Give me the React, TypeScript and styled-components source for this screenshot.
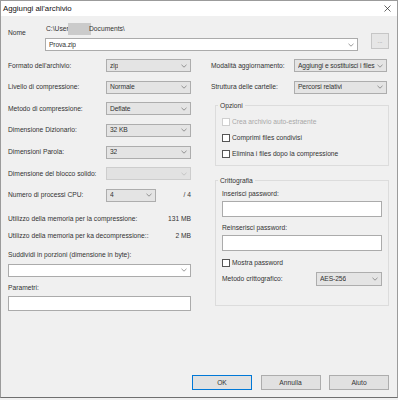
import React from 'react';
import styled, { createGlobalStyle, css } from 'styled-components';

const GlobalStyle = createGlobalStyle`
  html, body {
    margin: 0;
    padding: 0;
    background: #f0f0f0;
  }
  body {
    font-family: 'Liberation Sans', Arial, sans-serif;
  }
`;

const textColor = '#333333';
const fadedText = '#a8a8a8';
const fieldBorder = '#adadad';

const Window = styled.div`
  width: 398px;
  height: 398px;
  box-sizing: border-box;
  border: 1px solid #9b9b9b;
  border-bottom-color: #6f6f6f;
  background: #f0f0f0;
  display: flex;
  flex-direction: column;
  font-family: 'Liberation Sans', Arial, sans-serif;
  font-size: 6.7px;
  line-height: 10px;
  color: ${textColor};
`;

const TitleBar = styled.div`
  height: 15px;
  flex: none;
  background: #ffffff;
  display: flex;
  align-items: center;
  justify-content: space-between;
  padding: 0 6px 0 2px;
`;

const Title = styled.span`
  font-size: 7.8px;
  color: #111;
`;

const Body = styled.div`
  flex: 1;
  display: flex;
  flex-direction: column;
  padding: 7px 8px 7px 7px;
`;

const NameRow = styled.div`
  display: flex;
  align-items: flex-start;
`;

const NameLabel = styled.div`
  width: 37px;
  padding-top: 5px;
`;

const NameField = styled.div`
  width: 313px;
  display: flex;
  flex-direction: column;
  gap: 3px;
`;

const PathText = styled.div`
  display: flex;
  align-items: center;
  white-space: nowrap;
  padding-left: 1px;
`;

const Redacted = styled.span`
  display: inline-block;
  width: 23px;
  height: 12px;
  margin: 0 -2px 0 -4px;
  background: #cbcbcb;
`;

const BrowseButton = styled.div`
  width: 18px;
  height: 16px;
  box-sizing: border-box;
  margin: 10px 0 0 13px;
  border: 1px solid #c6c6c6;
  background: #e6e6e6;
  color: #8a8a8a;
  display: flex;
  align-items: center;
  justify-content: center;
  font-size: 6px;
`;

const Columns = styled.div`
  display: grid;
  grid-template-columns: 183px 1fr;
  column-gap: 20px;
  margin-top: 8px;
`;

const Column = styled.div`
  display: flex;
  flex-direction: column;
`;

const FieldGrid = styled.div<{ $label: number; $field: number }>`
  display: grid;
  grid-template-columns: ${p => p.$label}px ${p => p.$field}px;
  grid-auto-rows: 13px;
  row-gap: 8.67px;
  align-items: center;
`;

const Label = styled.span`
  white-space: nowrap;
`;

type ComboVariant = 'grey' | 'white' | 'disabled';

const ComboBox = styled.div<{ $variant: ComboVariant; $width?: number; $height?: number }>`
  box-sizing: border-box;
  height: ${p => p.$height ?? 13}px;
  width: ${p => (p.$width ? `${p.$width}px` : '100%')};
  display: flex;
  align-items: center;
  justify-content: space-between;
  gap: 2px;
  padding: 0 3px 0 3px;
  white-space: nowrap;
  ${p =>
    p.$variant === 'grey' &&
    css`
      background: #e4e4e4;
      border: 1px solid ${fieldBorder};
    `}
  ${p =>
    p.$variant === 'white' &&
    css`
      background: #ffffff;
      border: 1px solid #ababab;
    `}
  ${p =>
    p.$variant === 'disabled' &&
    css`
      background: #e2e2e2;
      border: 1px solid #cdcdcd;
    `}
`;

const ComboText = styled.span`
  overflow: hidden;
  letter-spacing: -0.1px;
`;

const Chevron = ({ faded }: { faded?: boolean }) => (
  <svg width="6" height="4" viewBox="0 0 6 4" style={{ flex: 'none' }}>
    <polyline
      points="0.5,0.8 3,3.2 5.5,0.8"
      fill="none"
      stroke={faded ? '#b8b8b8' : '#707070'}
      strokeWidth="0.7"
    />
  </svg>
);

const Combo = ({
  value,
  variant = 'grey',
  width,
  height,
}: {
  value?: string;
  variant?: ComboVariant;
  width?: number;
  height?: number;
}) => (
  <ComboBox $variant={variant} $width={width} $height={height}>
    <ComboText>{value}</ComboText>
    <Chevron faded={variant === 'disabled'} />
  </ComboBox>
);

const CpuCell = styled.div`
  display: flex;
  align-items: center;
  justify-content: space-between;
`;

const InfoRow = styled.div<{ $gap: number }>`
  display: flex;
  justify-content: space-between;
  margin-top: ${p => p.$gap}px;
`;

const StackLabel = styled.div<{ $gap: number }>`
  margin-top: ${p => p.$gap}px;
  white-space: nowrap;
`;

const Spaced = styled.div<{ $gap: number }>`
  margin-top: ${p => p.$gap}px;
`;

const TextBox = styled.div<{ $height: number }>`
  box-sizing: border-box;
  height: ${p => p.$height}px;
  background: #ffffff;
  border: 1px solid #ababab;
`;

const Group = styled.fieldset<{ $gap: number; $bottom: number }>`
  margin: ${p => p.$gap}px 0 0 4px;
  padding: 0 6px ${p => p.$bottom}px 6px;
  border: 1px solid #dcdcdc;
  min-width: 0;
`;

const Legend = styled.legend`
  padding: 0 2px;
  margin-left: -4px;
  line-height: 8px;
  font-size: 6.7px;
`;

const CheckRow = styled.label<{ $gap: number; $disabled?: boolean }>`
  display: flex;
  align-items: center;
  gap: 2px;
  margin-top: ${p => p.$gap}px;
  color: ${p => (p.$disabled ? fadedText : textColor)};
`;

const CheckBox = styled.span<{ $disabled?: boolean }>`
  width: 8px;
  height: 8px;
  box-sizing: border-box;
  background: #ffffff;
  border: 1px solid ${p => (p.$disabled ? '#cfcfcf' : '#555555')};
  flex: none;
`;

const MethodRow = styled.div`
  display: flex;
  align-items: center;
  justify-content: space-between;
  margin-top: 4px;
`;

const Footer = styled.div`
  margin-top: auto;
  display: flex;
  justify-content: flex-end;
  gap: 8.5px;
`;

const Button = styled.div<{ $primary?: boolean }>`
  width: 60px;
  height: 15px;
  box-sizing: border-box;
  display: flex;
  align-items: center;
  justify-content: center;
  background: #e1e1e1;
  border: 1px solid ${p => (p.$primary ? '#0078d7' : fieldBorder)};
`;

const CloseIcon = () => (
  <svg width="7" height="7" viewBox="0 0 7 7">
    <path d="M0.5 0.5 L6.5 6.5 M6.5 0.5 L0.5 6.5" stroke="#222" strokeWidth="0.7" />
  </svg>
);

const leftFields: { label: string; value: string; disabled?: boolean }[] = [
  { label: "Formato dell'archivio:", value: 'zip' },
  { label: 'Livello di compressione:', value: 'Normale' },
  { label: 'Metodo di compressione:', value: 'Deflate' },
  { label: 'Dimensione Dizionario:', value: '32 KB' },
  { label: 'Dimensioni Parola:', value: '32' },
  { label: 'Dimensione del blocco solido:', value: '', disabled: true },
];

export default function App() {
  return (
    <>
      <GlobalStyle />
      <Window>
        <TitleBar>
          <Title>Aggiungi all'archivio</Title>
          <CloseIcon />
        </TitleBar>
        <Body>
          <NameRow>
            <NameLabel>Nome</NameLabel>
            <NameField>
              <PathText>
                C:\Users
                <Redacted />
                Documents\
              </PathText>
              <Combo variant="white" value="Prova.zip" />
            </NameField>
            <BrowseButton>...</BrowseButton>
          </NameRow>

          <Columns>
            <Column>
              <FieldGrid $label={98} $field={85}>
                {leftFields.map(f => (
                  <React.Fragment key={f.label}>
                    <Label>{f.label}</Label>
                    <Combo value={f.value} variant={f.disabled ? 'disabled' : 'grey'} />
                  </React.Fragment>
                ))}
                <Label>Numero di processi CPU:</Label>
                <CpuCell>
                  <Combo value="4" width={50} />
                  <span>/ 4</span>
                </CpuCell>
              </FieldGrid>

              <InfoRow $gap={12}>
                <span>Utilizzo della memoria per la compressione:</span>
                <span>131 MB</span>
              </InfoRow>
              <InfoRow $gap={7}>
                <span>Utilizzo della memoria per ka decompressione::</span>
                <span>2 MB</span>
              </InfoRow>

              <StackLabel $gap={9}>Suddividi in porzioni (dimensione in byte):</StackLabel>
              <Spaced $gap={4}>
                <Combo variant="white" />
              </Spaced>

              <StackLabel $gap={6}>Parametri:</StackLabel>
              <Spaced $gap={3}>
                <TextBox $height={15} />
              </Spaced>
            </Column>

            <Column>
              <FieldGrid $label={83} $field={93}>
                <Label>Modalità aggiornamento:</Label>
                <Combo value="Aggiungi e sostituisci i files" />
                <Label>Struttura delle cartelle:</Label>
                <Combo value="Percorsi relativi" />
              </FieldGrid>

              <Group $gap={8} $bottom={6}>
                <Legend>Opzioni</Legend>
                <CheckRow $gap={7} $disabled>
                  <CheckBox $disabled />
                  Crea archivio auto-estraente
                </CheckRow>
                <CheckRow $gap={6}>
                  <CheckBox />
                  Comprimi files condivisi
                </CheckRow>
                <CheckRow $gap={6}>
                  <CheckBox />
                  Elimina i files dopo la compressione
                </CheckRow>
              </Group>

              <Group $gap={11} $bottom={19}>
                <Legend>Crittografia</Legend>
                <StackLabel $gap={4}>Inserisci password:</StackLabel>
                <Spaced $gap={2}>
                  <TextBox $height={16} />
                </Spaced>
                <StackLabel $gap={6}>Reinserisci password:</StackLabel>
                <Spaced $gap={2}>
                  <TextBox $height={16} />
                </Spaced>
                <CheckRow $gap={7}>
                  <CheckBox />
                  Mostra password
                </CheckRow>
                <MethodRow>
                  <span>Metodo crittografico:</span>
                  <Combo value="AES-256" width={66} height={14} />
                </MethodRow>
              </Group>
            </Column>
          </Columns>

          <Footer>
            <Button $primary>OK</Button>
            <Button>Annulla</Button>
            <Button>Aiuto</Button>
          </Footer>
        </Body>
      </Window>
    </>
  );
}
